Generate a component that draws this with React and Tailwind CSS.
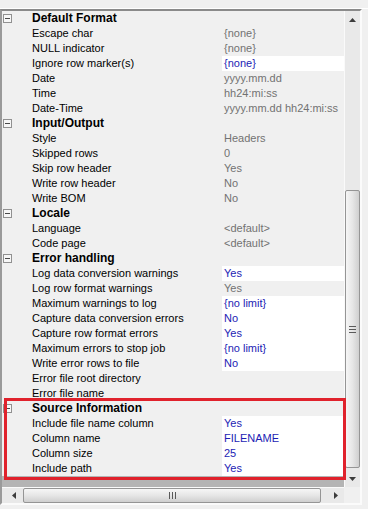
const sections = [
  {
    title: "Default Format",
    rows: [
      ["Escape char", "{none}"],
      ["NULL indicator", "{none}"],
      ["Ignore row marker(s)", "{none}", true],
      ["Date", "yyyy.mm.dd"],
      ["Time", "hh24:mi:ss"],
      ["Date-Time", "yyyy.mm.dd hh24:mi:ss"]
    ]
  },
  {
    title: "Input/Output",
    rows: [
      ["Style", "Headers"],
      ["Skipped rows", "0"],
      ["Skip row header", "Yes"],
      ["Write row header", "No"],
      ["Write BOM", "No"]
    ]
  },
  {
    title: "Locale",
    rows: [
      ["Language", "<default>"],
      ["Code page", "<default>"]
    ]
  },
  {
    title: "Error handling",
    rows: [
      ["Log data conversion warnings", "Yes", true],
      ["Log row format warnings", "Yes"],
      ["Maximum warnings to log", "{no limit}", true],
      ["Capture data conversion errors", "No", true],
      ["Capture row format errors", "Yes", true],
      ["Maximum errors to stop job", "{no limit}", true],
      ["Write error rows to file", "No", true],
      ["Error file root directory", ""],
      ["Error file name", ""]
    ]
  },
  {
    title: "Source Information",
    marked: true,
    rows: [
      ["Include file name column", "Yes", true],
      ["Column name", "FILENAME", true],
      ["Column size", "25", true],
      ["Include path", "Yes", true]
    ]
  }
];

function MinusBox() {
  return (
    <span className="ml-[1px] flex h-[9px] w-[9px] items-center justify-center border border-[#919191] bg-[#f7f7f7]">
      <span className="h-px w-[5px] bg-[#4a4a4a]" />
    </span>
  );
}

function Section({ section }) {
  return (
    <div className="relative">
      <div className="flex h-[15px] items-center">
        <div className="w-[30px]">
          <MinusBox />
        </div>
        <span className="text-[12px] font-bold leading-[15px] text-black">{section.title}</span>
      </div>
      {section.rows.map(([name, value, editable]) => (
        <div key={name} className="flex h-[15px] leading-[15px]">
          <div className="w-[220px] truncate pl-[30px] text-black">{name}</div>
          <div
            className={
              editable
                ? "flex-1 bg-white pl-[2px] text-[#1c1cb4]"
                : "flex-1 pl-[2px] text-[#727272]"
            }
          >
            {value}
          </div>
        </div>
      ))}
      {section.marked ? (
        <div className="pointer-events-none absolute -top-[3px] left-[2px] z-10 h-[82px] w-[342px] border-[3px] border-[#e0222c]" />
      ) : null}
    </div>
  );
}

function Arrow({ dir }) {
  const pts = {
    up: "0,4 3.5,0 7,4",
    down: "0,0 3.5,4 7,0",
    left: "4,0 0,3.5 4,7",
    right: "0,0 4,3.5 0,7"
  }[dir];
  const vertical = dir === "up" || dir === "down";
  return (
    <svg width={vertical ? 7 : 4} height={vertical ? 4 : 7} aria-hidden>
      <polygon points={pts} fill="#3c3c3c" />
    </svg>
  );
}

export default function App() {
  return (
    <div
      className="h-[509px] w-[368px] overflow-hidden bg-[#f0f0f0] text-[11px]"
      style={{ fontFamily: '"Liberation Sans", Arial, sans-serif' }}
    >
      <div className="h-[9px] border-b border-white" />
      <div className="mr-[6px] flex h-[496px] flex-col border-t-2 border-l-2 border-r-2 border-b-2 border-t-[#8a8a8a] border-l-[#9a9a9a] border-r-[#fbfbfb] border-b-[#fbfbfb]">
        <div className="flex min-h-0 flex-1">
          <div className="flex w-[342px] flex-col">
            {sections.map((s) => (
              <Section key={s.title} section={s} />
            ))}
            <div className="flex-1 bg-[#b4b4b4]" />
          </div>
          <div className="flex w-[16px] flex-col border-l border-[#fafafa] bg-[#e9e9e9]">
            <div className="flex h-[17px] items-center justify-center">
              <Arrow dir="up" />
            </div>
            <div className="flex flex-1 flex-col pt-[162px] pb-[2px]">
              <div className="flex flex-1 items-center justify-center rounded-[2px] border border-[#959595] bg-linear-to-r from-[#f6f6f6] via-[#e6e6e6] to-[#cfcfcf]">
                <div className="flex flex-col gap-[2px]">
                  <span className="h-px w-[7px] bg-[#5a5a5a]" />
                  <span className="h-px w-[7px] bg-[#5a5a5a]" />
                  <span className="h-px w-[7px] bg-[#5a5a5a]" />
                </div>
              </div>
            </div>
            <div className="flex h-[17px] items-center justify-center">
              <Arrow dir="down" />
            </div>
          </div>
        </div>
        <div className="flex h-[16px]">
          <div className="flex w-[342px] items-center border-t border-[#fafafa] bg-[#e9e9e9]">
            <div className="flex w-[21px] justify-center pl-[3px]">
              <Arrow dir="left" />
            </div>
            <div className="flex h-[15px] w-[298px] items-center justify-center rounded-[2px] border border-[#959595] bg-linear-to-b from-[#f6f6f6] via-[#e6e6e6] to-[#cfcfcf]">
              <div className="flex gap-[2px]">
                <span className="h-[7px] w-px bg-[#5a5a5a]" />
                <span className="h-[7px] w-px bg-[#5a5a5a]" />
                <span className="h-[7px] w-px bg-[#5a5a5a]" />
              </div>
            </div>
            <div className="flex flex-1 justify-center pl-[6px]">
              <Arrow dir="right" />
            </div>
          </div>
          <div className="w-[16px] bg-[#f0f0f0]" />
        </div>
      </div>
    </div>
  );
}
